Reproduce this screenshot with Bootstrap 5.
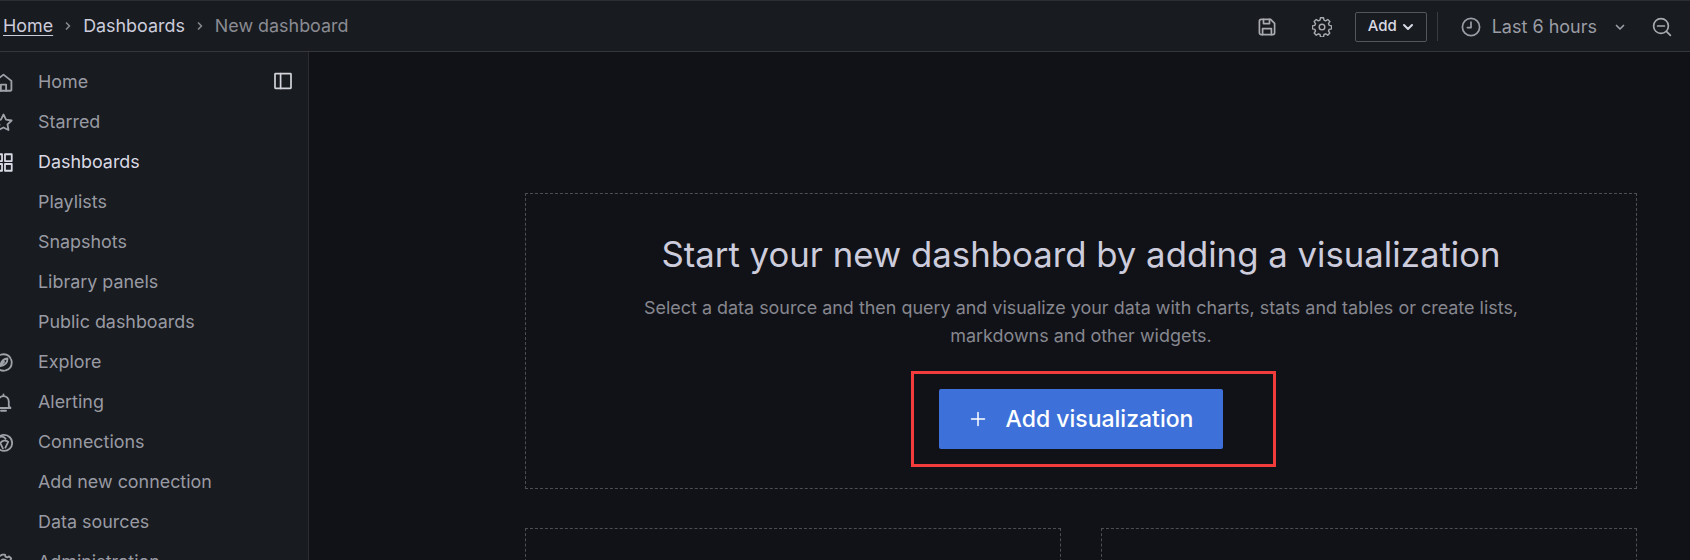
<!DOCTYPE html>
<html lang="en">
<head>
<meta charset="utf-8">
<title>New dashboard</title>
<link href="https://cdn.jsdelivr.net/npm/bootstrap@5.3.0/dist/css/bootstrap.min.css" rel="stylesheet">
<style>
html,body{height:560px;overflow:hidden;background:#111217;}
body{font-family:Inter,"Liberation Sans",sans-serif;color:#ccccdc;font-size:16px;}
svg{display:block;flex:none;fill:none;stroke:currentColor;stroke-width:1.7;stroke-linecap:round;stroke-linejoin:round;}
.topstrip{height:52px;background:#181b1f;border-top:1px solid #2b2d33;border-bottom:1px solid #34363b;padding-top:1px;}
.crumbs{padding-left:3px;gap:9px;font-size:17.9px;}
.crumb-home{color:#ccccdc;text-decoration:underline;text-underline-offset:3px;}
.crumb-mid{color:#ccccdc;}
.crumb-last{color:#8a8b93;}
.crumb-chev{color:#85878d;}
.tools{color:#a9aab2;padding-right:18px;}
.gear-i{margin:0 23px 0 35px;}
.add-btn{width:72px;height:30px;border:1px solid #54565c;border-radius:2px;background:transparent;color:#d8d9e4;font-size:15px;font-weight:500;gap:5px;padding:0;}
.vr-line{width:1px;height:29px;background:#3a3c42;margin:0 23px 0 10px;}
.range{color:#9b9da6;font-size:18px;gap:11px;}
.chev-i{margin-left:6px;}
.zoom-i{margin-left:26px;}
.bodyrow{height:508px;}
.sidenav{width:309px;background:#181b1f;border-right:1px solid #2b2d33;padding-top:10px;overflow:hidden;position:relative;flex:none;}
.navitem{height:40px;color:#989aa3;font-size:17.9px;gap:25px;margin-left:-6px;white-space:nowrap;}
.navitem.on{color:#d8d9e4;}
.navicon{width:19px;height:19px;color:#a0a2aa;flex:none;}
.navitem.on .navicon{color:#d8d9e4;}
.navspace{width:19px;flex:none;}
.dock{position:absolute;top:20px;right:16px;color:#d2d3dc;}
.mainarea{padding:141px 0 0 216px;width:1381px;flex:none;}
.dashbox{border:1px dashed #4c4e54;}
.heroBox{width:1112px;height:296px;padding-top:40px;}
.hero-title{font-size:34.75px;font-weight:400;line-height:1.2;color:#ccccdc;margin:0 0 18px;}
.hero-sub{width:890px;font-size:17.95px;line-height:28px;color:#86878f;margin:0 auto 21px;}
.mark-box{width:365px;height:96px;border:3px solid #f23c3c;margin-left:385px;padding-left:25px;}
.viz-btn{width:284px;height:60px;background:#3d71d9;color:#fff;border:0;border-radius:2px;font-size:23px;font-weight:500;gap:19px;padding:1px 0 0;}
.viz-btn:hover{background:#3d71d9;color:#fff;}
.lowrow{gap:40px;margin-top:39px;}
.lowbox{height:60px;}
.lowleft{width:536px;}
.lowright{width:536px;}
</style>
</head>
<body>
<header class="topstrip d-flex align-items-center justify-content-between">
  <nav class="crumbs d-flex align-items-center">
    <a class="crumb-home" href="#">Home</a>
    <svg class="crumb-chev" width="12" height="12" viewBox="0 0 12 12"><path d="M4.5 3l3 3-3 3"/></svg>
    <span class="crumb-mid">Dashboards</span>
    <svg class="crumb-chev" width="12" height="12" viewBox="0 0 12 12"><path d="M4.5 3l3 3-3 3"/></svg>
    <span class="crumb-last">New dashboard</span>
  </nav>
  <div class="tools d-flex align-items-center">
    <svg width="20" height="20" viewBox="0 0 20 20"><path d="M2.4 4.2A1.8 1.8 0 0 1 4.2 2.4h9.4l4 4v9.4a1.8 1.8 0 0 1-1.8 1.8H4.2a1.8 1.8 0 0 1-1.8-1.8z"/><path d="M6.5 2.4v4.2h6V2.4M5.6 17.6v-6h8.8v6"/></svg>
    <svg class="gear-i" width="20" height="20" viewBox="0 0 24 24"><circle cx="12" cy="12" r="3.4"/><path d="M10.2 1.5h3.6l.6 2.9 2 .8 2.5-1.6 2.5 2.5-1.6 2.5.8 2 2.9.6v3.6l-2.9.6-.8 2 1.6 2.5-2.5 2.5-2.5-1.6-2 .8-.6 2.9h-3.6l-.6-2.9-2-.8-2.5 1.6-2.5-2.5 1.6-2.5-.8-2-2.9-.6v-3.6l2.9-.6.8-2-1.6-2.5 2.5-2.5 2.5 1.6 2-.8z" transform="translate(0 -.6)"/></svg>
    <button class="add-btn btn d-flex align-items-center justify-content-center" type="button">Add
      <svg width="12" height="12" viewBox="0 0 12 12" style="stroke-width:2"><path d="M2 4l4 4 4-4"/></svg>
    </button>
    <span class="vr-line"></span>
    <div class="range d-flex align-items-center">
      <svg width="20" height="20" viewBox="0 0 20 20"><circle cx="10" cy="10" r="8.6"/><path d="M10 5.2V10.6H6.4"/></svg>
      <span>Last 6 hours</span>
      <svg class="chev-i" width="12" height="12" viewBox="0 0 12 12"><path d="M2.5 4.5L6 8l3.5-3.5"/></svg>
    </div>
    <svg class="zoom-i" width="20" height="20" viewBox="0 0 20 20"><circle cx="9" cy="9" r="7.4"/><path d="M5.6 9h6.8M14.4 14.4L18.4 18.4"/></svg>
  </div>
</header>
<div class="bodyrow d-flex">
  <aside class="sidenav">
    <svg class="dock" width="18" height="18" viewBox="0 0 18 18"><rect x="1" y="1.6" width="16" height="14.8" rx=".6"/><path d="M6.6 1.6v14.8"/></svg>
    <div class="navitem d-flex align-items-center"><svg class="navicon" viewBox="0 0 18 18"><path d="M1.5 7.5L9 1.5l7.5 6V16a.8.8 0 0 1-.8.8H2.3a.8.8 0 0 1-.8-.8z"/><path d="M6.5 16.8V11h5v5.8"/></svg><span>Home</span></div>
    <div class="navitem d-flex align-items-center"><svg class="navicon" viewBox="0 0 18 18"><path d="M9 1.4l2.4 4.9 5.3.8-3.9 3.7.9 5.3L9 13.7l-4.7 2.4.9-5.3-3.9-3.7 5.3-.8z"/></svg><span>Starred</span></div>
    <div class="navitem on d-flex align-items-center"><svg class="navicon" viewBox="0 0 18 18"><rect x="1.2" y="1.2" width="6.4" height="6.4"/><rect x="10.4" y="1.2" width="6.4" height="6.4"/><rect x="1.2" y="10.4" width="6.4" height="6.4"/><rect x="10.4" y="10.4" width="6.4" height="6.4"/></svg><span>Dashboards</span></div>
    <div class="navitem d-flex align-items-center"><span class="navspace"></span><span>Playlists</span></div>
    <div class="navitem d-flex align-items-center"><span class="navspace"></span><span>Snapshots</span></div>
    <div class="navitem d-flex align-items-center"><span class="navspace"></span><span>Library panels</span></div>
    <div class="navitem d-flex align-items-center"><span class="navspace"></span><span>Public dashboards</span></div>
    <div class="navitem d-flex align-items-center"><svg class="navicon" viewBox="0 0 18 18"><circle cx="9" cy="9" r="7.8" stroke-dasharray="10 1.4"/><path d="M12.8 5.2C12.8 8.8 10.8 11.6 6 12.4 6.4 8.4 8.8 5.6 12.8 5.2zM5.2 12.8L9.6 8.4"/></svg><span>Explore</span></div>
    <div class="navitem d-flex align-items-center"><svg class="navicon" viewBox="0 0 18 18"><path d="M4 12.5V8a5 5 0 0 1 10 0v4.5l1.6 1.7H2.4z"/><path d="M6.6 16.8h4.8M9 1.4V3"/></svg><span>Alerting</span></div>
    <div class="navitem d-flex align-items-center"><svg class="navicon" viewBox="0 0 18 18"><circle cx="9.6" cy="9.4" r="7.6"/><path d="M3.2 5.2C6 2.6 9.4 3 11 5.4M6 9.6C7.6 7 11 6.4 13.4 8.4M13.4 8.4l-2.6 5.4M6 9.6l2.4 5"/></svg><span>Connections</span></div>
    <div class="navitem d-flex align-items-center"><span class="navspace"></span><span>Add new connection</span></div>
    <div class="navitem d-flex align-items-center"><span class="navspace"></span><span>Data sources</span></div>
    <div class="navitem d-flex align-items-center"><svg class="navicon" viewBox="0 0 18 18"><circle cx="9" cy="9" r="3"/><path d="M7.6 1.5h2.8l.5 2 1.6.7 1.8-1 2 2-1 1.8.7 1.6 2 .5v2.8l-2 .5-.7 1.6 1 1.8-2 2-1.8-1-1.6.7-.5 2H7.6l-.5-2-1.6-.7-1.8 1-2-2 1-1.8-.7-1.6-2-.5V7.6l2-.5.7-1.6-1-1.8 2-2 1.8 1 1.6-.7z"/></svg><span>Administration</span></div>
  </aside>
  <main class="mainarea">
    <section class="dashbox heroBox text-center">
      <h1 class="hero-title">Start your new dashboard by adding a visualization</h1>
      <p class="hero-sub">Select a data source and then query and visualize your data with charts, stats and tables or create lists, markdowns and other widgets.</p>
      <div class="mark-box d-flex align-items-center">
        <button class="viz-btn btn d-flex align-items-center justify-content-center" type="button">
          <svg width="18" height="18" viewBox="0 0 18 18" style="stroke-width:1.5"><path d="M9 2.5v13M2.5 9h13"/></svg>
          <span>Add visualization</span>
        </button>
      </div>
    </section>
    <div class="lowrow d-flex">
      <section class="dashbox lowbox lowleft"></section>
      <section class="dashbox lowbox lowright"></section>
    </div>
  </main>
</div>
<script src="https://cdn.jsdelivr.net/npm/bootstrap@5.3.0/dist/js/bootstrap.bundle.min.js"></script>
</body>
</html>
